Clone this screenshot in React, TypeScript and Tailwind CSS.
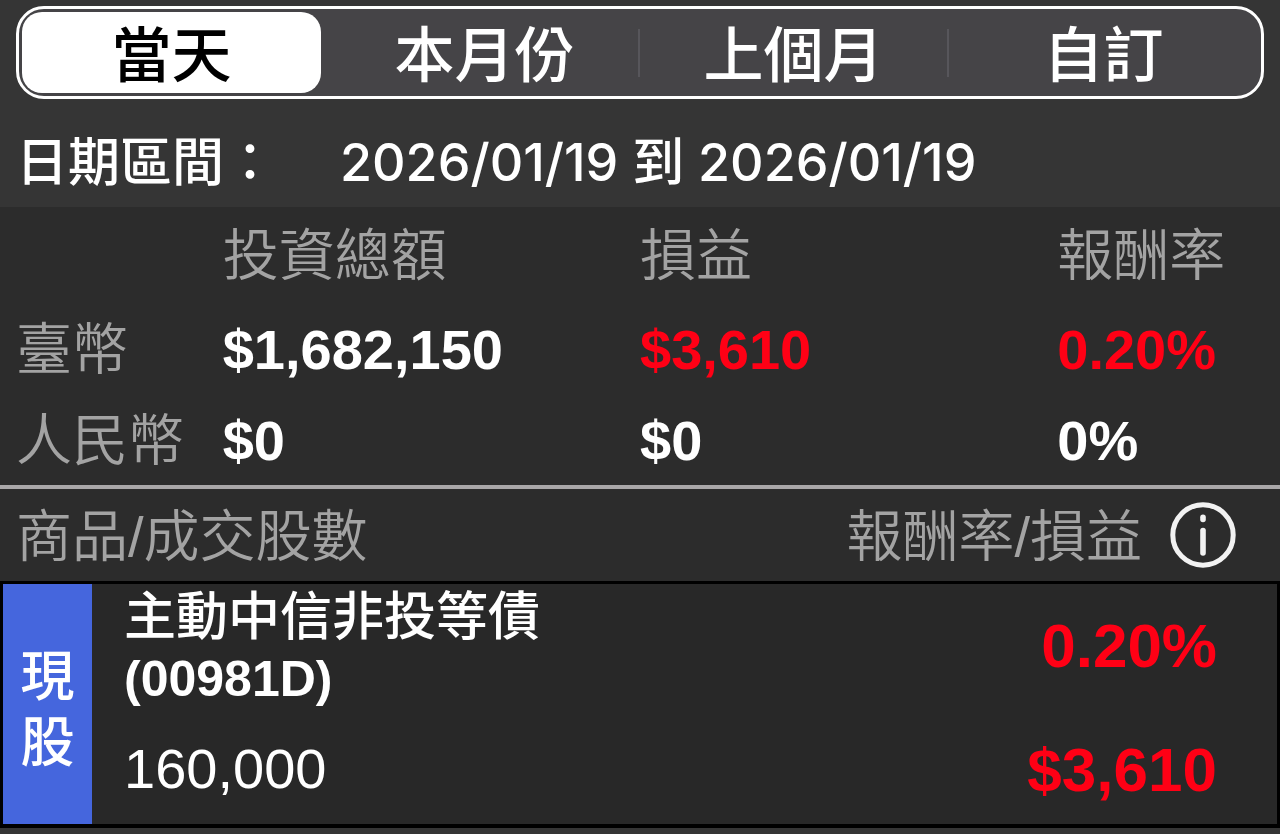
import { useState } from "react"

const ranges = ["當天", "本月份", "上個月", "自訂"]

const summary = [
  { currency: "臺幣", total: "$1,682,150", profit: "$3,610", rate: "0.20%", up: true },
  { currency: "人民幣", total: "$0", profit: "$0", rate: "0%", up: false },
]

function RangeTabs() {
  const [active, setActive] = useState(0)

  return (
    <div className="flex h-[93px] rounded-[28px] border-3 border-white bg-[#454447] p-[3px]">
      {ranges.map((label, i) => (
        <div key={label} className="flex flex-1 items-center">
          <button
            type="button"
            aria-pressed={active === i}
            onClick={() => setActive(i)}
            className={
              active === i
                ? "mr-2 h-full flex-1 rounded-[20px] bg-white pt-2 text-[60px] leading-none font-medium text-black"
                : "h-full flex-1 rounded-[20px] pt-2 text-[60px] leading-none font-medium text-white"
            }
          >
            {label}
          </button>
          {/* Divider is hidden next to the selected segment */}
          {i < ranges.length - 1 && (
            <span className={active === i || active === i + 1 ? "w-0.5" : "h-12 w-0.5 bg-[#57565b]"} />
          )}
        </div>
      ))}
    </div>
  )
}

function InfoIcon() {
  return (
    <svg viewBox="0 0 66 66" className="size-[66px]" fill="none" stroke="#f2f2f2" strokeLinecap="round">
      <circle cx="33" cy="33" r="30.2" strokeWidth="5" />
      <path d="M33 28.5V51" strokeWidth="5.6" />
      <path d="M33 15.3V17.5" strokeWidth="5.6" />
    </svg>
  )
}

export default function App() {
  return (
    <div className="min-h-screen w-full bg-[#353535] font-['Liberation_Sans','Noto_Sans_CJK_TC',sans-serif] text-white">
      {/* Range picker */}
      <header className="px-4 pt-1.5">
        <RangeTabs />
        <div className="flex h-[108px] items-center pt-5 font-['Inter','Noto_Sans_CJK_TC',sans-serif] text-[52px] leading-[72px] font-medium whitespace-nowrap">
          <span className="w-[324px]">日期區間：</span>
          <span>2026/01/19 到 2026/01/19</span>
        </div>
      </header>

      {/* Totals by currency */}
      <table className="w-full table-fixed border-b-4 border-[#a9a7a8] bg-[#2c2c2c] text-left text-[56px] leading-[80px]">
        <thead className="text-[#a3a3a3]">
          <tr className="h-24">
            <th className="w-[17.4%] p-0" aria-label="幣別" />
            <th className="w-[32.6%] p-0 pt-0.5 font-[350]">投資總額</th>
            <th className="w-[32.6%] p-0 pt-0.5 font-[350]">損益</th>
            <th className="w-[17.4%] p-0 pt-0.5 font-[350]">報酬率</th>
          </tr>
        </thead>
        <tbody>
          {summary.map((row) => (
            <tr key={row.currency} className="h-[92px] font-bold">
              <th className="p-0 pt-0.5 pl-4 font-[350] whitespace-nowrap text-[#a3a3a3]">{row.currency}</th>
              <td className="p-0 pt-0.5">{row.total}</td>
              <td className={row.up ? "p-0 pt-0.5 text-[#ff0015]" : "p-0 pt-0.5"}>{row.profit}</td>
              <td className={row.up ? "p-0 pt-0.5 text-[#ff0015]" : "p-0 pt-0.5"}>{row.rate}</td>
            </tr>
          ))}
        </tbody>
      </table>

      {/* List heading */}
      <div className="flex h-[92px] items-center bg-[#2c2c2c] pr-11 pl-4 text-[56px] leading-[80px] font-[350] text-[#a3a3a3]">
        <span className="flex-1 pt-1">商品/成交股數</span>
        <span className="pt-1">報酬率/損益</span>
        <button type="button" aria-label="說明" className="ml-7">
          <InfoIcon />
        </button>
      </div>

      {/* Position */}
      <article className="flex border-3 border-b-4 border-black bg-[#282828]">
        <div className="flex w-[89px] flex-col items-center justify-center bg-[#4566dd] pt-3 text-[54px] leading-[66px] font-medium">
          <span>現</span>
          <span>股</span>
        </div>
        <div className="flex-1 pt-0.5 pb-3 pl-8">
          <h2 className="text-[52px] leading-[62px] font-medium">主動中信非投等債</h2>
          <p className="text-[50px] leading-[62px] font-bold">(00981D)</p>
          <p className="pt-4 text-[56px] leading-[86px]">160,000</p>
        </div>
        <div className="flex flex-col gap-11 pt-[22px] pr-[60px] text-right text-[62px] leading-[80px] font-bold text-[#ff0015]">
          <p>0.20%</p>
          <p>$3,610</p>
        </div>
      </article>
    </div>
  )
}
